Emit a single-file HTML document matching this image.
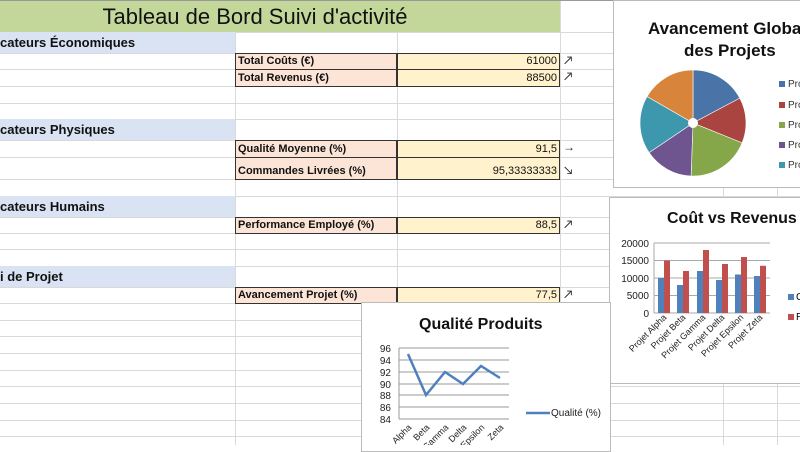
<!DOCTYPE html>
<html><head><meta charset="utf-8"><style>
*{margin:0;padding:0;box-sizing:border-box}
body{width:800px;height:445px;overflow:hidden;background:#fff;position:relative;font-family:"Liberation Sans",Calibri,sans-serif}
.a{position:absolute}
.hl{position:absolute;left:0;width:800px;height:1px;background:#d9d9d9}
.vl{position:absolute;top:0;width:1px;height:445px;background:#d9d9d9}
.sec{position:absolute;left:0;width:235px;background:#dae3f3;font-weight:bold;font-size:13px;line-height:21px;padding-left:0;color:#111}
.lab{position:absolute;left:235px;width:162px;background:#fce4d6;border:1px solid #333;font-weight:bold;font-size:11px;padding-left:2px;color:#111;white-space:nowrap}
.val{position:absolute;left:397px;width:163px;background:#fff2cc;border:1px solid #333;font-size:11px;text-align:right;padding-right:2px;color:#111}
.arr{position:absolute;left:563px;font-size:12px;color:#222}
.chart{position:absolute;background:#fff;border:1px solid #bbb;overflow:hidden}
</style></head><body>
<div class="hl" style="top:32px"></div><div class="hl" style="top:53px"></div><div class="hl" style="top:69px"></div><div class="hl" style="top:86px"></div><div class="hl" style="top:103px"></div><div class="hl" style="top:119px"></div><div class="hl" style="top:140px"></div><div class="hl" style="top:157px"></div><div class="hl" style="top:179px"></div><div class="hl" style="top:196px"></div><div class="hl" style="top:217px"></div><div class="hl" style="top:233px"></div><div class="hl" style="top:249px"></div><div class="hl" style="top:266px"></div><div class="hl" style="top:287px"></div><div class="hl" style="top:303px"></div><div class="hl" style="top:320px"></div><div class="hl" style="top:336px"></div><div class="hl" style="top:353px"></div><div class="hl" style="top:370px"></div><div class="hl" style="top:386px"></div><div class="hl" style="top:403px"></div><div class="hl" style="top:420px"></div><div class="hl" style="top:436px"></div>
<div class="vl" style="left:235px"></div><div class="vl" style="left:397px"></div><div class="vl" style="left:560px"></div><div class="vl" style="left:723px"></div><div class="vl" style="left:777px"></div>
<div class="a" style="left:0;top:0;width:800px;height:1px;background:#999"></div>
<div class="a" style="left:0;top:1px;width:560px;height:31px;background:#c4d79b;text-align:center;padding-right:50px;font-size:22px;line-height:31px;color:#111">Tableau de Bord Suivi d'activité</div>
<div class="sec" style="top:32px;height:21px">cateurs Économiques</div>
<div class="sec" style="top:119px;height:21px">cateurs Physiques</div>
<div class="sec" style="top:196px;height:21px">cateurs Humains</div>
<div class="sec" style="top:266px;height:21px">i de Projet</div>
<div class="lab" style="top:53px;height:17px;line-height:15px">Total Coûts (€)</div><div class="val" style="top:53px;height:17px;line-height:15px">61000</div><div class="arr" style="top:53px">↗</div>
<div class="lab" style="top:69px;height:18px;line-height:16px">Total Revenus (€)</div><div class="val" style="top:69px;height:18px;line-height:16px">88500</div><div class="arr" style="top:69px">↗</div>
<div class="lab" style="top:140px;height:18px;line-height:16px">Qualité Moyenne (%)</div><div class="val" style="top:140px;height:18px;line-height:16px">91,5</div><div class="arr" style="top:140px">→</div>
<div class="lab" style="top:157px;height:23px;line-height:26px">Commandes Livrées (%)</div><div class="val" style="top:157px;height:23px;line-height:26px">95,33333333</div><div class="arr" style="top:163px">↘</div>
<div class="lab" style="top:217px;height:17px;line-height:15px">Performance Employé (%)</div><div class="val" style="top:217px;height:17px;line-height:15px">88,5</div><div class="arr" style="top:217px">↗</div>
<div class="lab" style="top:287px;height:17px;line-height:15px">Avancement Projet (%)</div><div class="val" style="top:287px;height:17px;line-height:15px">77,5</div><div class="arr" style="top:287px">↗</div>

<div class="chart" style="left:613px;top:0;width:190px;height:188px"></div>
<div class="chart" style="left:609px;top:197px;width:195px;height:187px"></div>
<div class="chart" style="left:361px;top:302px;width:250px;height:150px"></div>
<svg class="a" style="left:0;top:0" width="800" height="445" font-family="Liberation Sans,sans-serif">
<text x="648" y="34" font-size="17" font-weight="bold" fill="#111">Avancement Global</text>
<text x="684" y="56" font-size="17" font-weight="bold" fill="#111">des Projets</text>
<path d="M693,123 L693,70 A53,53 0 0 1 739.8,98.1Z" fill="#4a74a8" stroke="#fff" stroke-width=".6"/>
<path d="M693,123 L739.8,98.1 A53,53 0 0 1 742.1,142.9Z" fill="#a94441" stroke="#fff" stroke-width=".6"/>
<path d="M693,123 L742.1,142.9 A53,53 0 0 1 691.1,176Z" fill="#86a64a" stroke="#fff" stroke-width=".6"/>
<path d="M693,123 L691.1,176 A53,53 0 0 1 649.1,152.6Z" fill="#6e5590" stroke="#fff" stroke-width=".6"/>
<path d="M693,123 L649.1,152.6 A53,53 0 0 1 647.1,96.5Z" fill="#3d97ad" stroke="#fff" stroke-width=".6"/>
<path d="M693,123 L647.1,96.5 A53,53 0 0 1 693,70Z" fill="#d9843b" stroke="#fff" stroke-width=".6"/>
<circle cx="693" cy="123" r="5" fill="#fff"/>
<g font-size="10" fill="#333">
<rect x="779" y="81" width="6" height="6" fill="#4a74a8"/><text x="788" y="87">Pro</text>
<rect x="779" y="102" width="6" height="6" fill="#a94441"/><text x="788" y="108">Pro</text>
<rect x="779" y="122" width="6" height="6" fill="#86a64a"/><text x="788" y="128">Pro</text>
<rect x="779" y="142" width="6" height="6" fill="#6e5590"/><text x="788" y="148">Pro</text>
<rect x="779" y="162" width="6" height="6" fill="#3d97ad"/><text x="788" y="168">Pro</text>
</g>
<text x="667" y="223" font-size="16" font-weight="bold" fill="#111">Coût vs Revenus</text>
<g stroke="#aaa" stroke-width="1"><line x1="654" y1="243" x2="770" y2="243"/><line x1="654" y1="260.5" x2="770" y2="260.5"/><line x1="654" y1="278" x2="770" y2="278"/><line x1="654" y1="295.5" x2="770" y2="295.5"/><line x1="654" y1="313" x2="770" y2="313"/><line x1="654" y1="243" x2="654" y2="313"/></g>
<g font-size="10" fill="#222" text-anchor="end"><text x="649" y="247">20000</text><text x="649" y="264">15000</text><text x="649" y="282">10000</text><text x="649" y="299">5000</text><text x="649" y="317">0</text></g>
<g fill="#4f81bd"><rect x="658" y="278" width="6" height="35"/><rect x="677" y="285" width="6" height="28"/><rect x="697" y="271" width="6" height="42"/><rect x="716" y="280" width="6" height="33"/><rect x="735" y="274.5" width="6" height="38.5"/><rect x="754" y="276" width="6" height="37"/></g>
<g fill="#c0504d"><rect x="664" y="260.5" width="6" height="52.5"/><rect x="683" y="271" width="6" height="42"/><rect x="703" y="250" width="6" height="63"/><rect x="722" y="264" width="6" height="49"/><rect x="741" y="257" width="6" height="56"/><rect x="760" y="265.8" width="6" height="47.2"/></g>
<g font-size="9" fill="#222" text-anchor="end">
<text transform="translate(667,318) rotate(-45)">Projet Alpha</text><text transform="translate(686,318) rotate(-45)">Projet Beta</text><text transform="translate(706,318) rotate(-45)">Projet Gamma</text><text transform="translate(725,318) rotate(-45)">Projet Delta</text><text transform="translate(744,318) rotate(-45)">Projet Epsilon</text><text transform="translate(763,318) rotate(-45)">Projet Zeta</text></g>
<rect x="788" y="294" width="6" height="6" fill="#4f81bd"/><text x="796" y="300" font-size="10">C</text>
<rect x="788" y="314" width="6" height="6" fill="#c0504d"/><text x="796" y="320" font-size="10">R</text>
<text x="419" y="329" font-size="16" font-weight="bold" fill="#111">Qualité Produits</text>
<g stroke="#999" stroke-width="1"><line x1="399" y1="348" x2="509" y2="348"/><line x1="399" y1="360" x2="509" y2="360"/><line x1="399" y1="372" x2="509" y2="372"/><line x1="399" y1="384" x2="509" y2="384"/><line x1="399" y1="395" x2="509" y2="395"/><line x1="399" y1="407" x2="509" y2="407"/><line x1="399" y1="419" x2="509" y2="419"/><line x1="399" y1="348" x2="399" y2="419"/></g>
<g font-size="10" fill="#222" text-anchor="end"><text x="391" y="352">96</text><text x="391" y="364">94</text><text x="391" y="376">92</text><text x="391" y="388">90</text><text x="391" y="399">88</text><text x="391" y="411">86</text><text x="391" y="423">84</text></g>
<polyline points="408,354 426,395 445,372 463,384 481,366 500,378" fill="none" stroke="#4f81bd" stroke-width="2.5"/>
<g font-size="9" fill="#222" text-anchor="end"><text transform="translate(412,428) rotate(-45)">Alpha</text><text transform="translate(430,428) rotate(-45)">Beta</text><text transform="translate(449,428) rotate(-45)">Gamma</text><text transform="translate(467,428) rotate(-45)">Delta</text><text transform="translate(485,428) rotate(-45)">Epsilon</text><text transform="translate(504,428) rotate(-45)">Zeta</text></g>
<line x1="526" y1="413" x2="550" y2="413" stroke="#4f81bd" stroke-width="2.5"/><text x="551" y="416" font-size="10" fill="#222">Qualité (%)</text>
</svg>
</body></html>
